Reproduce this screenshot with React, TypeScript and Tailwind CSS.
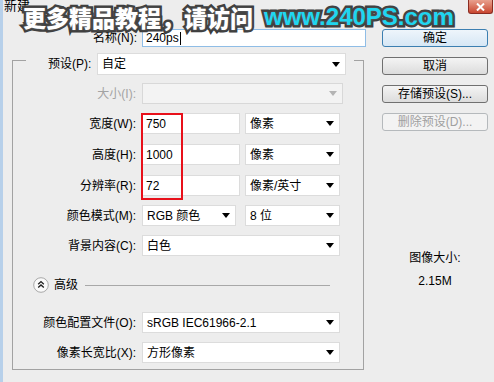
import React from "react";

const base = "font-['Liberation_Sans','Noto_Sans_CJK_SC',sans-serif] text-[12px] leading-none text-black";

function Arrow({ disabled }: { disabled?: boolean }) {
  return (
    <svg width="8" height="5" viewBox="0 0 8 5" className="shrink-0">
      <path d="M0 0H8L4 5Z" fill={disabled ? "#b4b4b4" : "#000"} />
    </svg>
  );
}

function Select({ w, text, disabled, h = "h-[21px]" }: { w: string; text?: string; disabled?: boolean; h?: string }) {
  return (
    <div
      className={`flex ${w} ${h} items-center justify-between border pl-[4px] pr-[5px] ${
        disabled ? "border-[#d8d8d8] bg-[#f3f3f3]" : "border-[#dcdcdc] bg-white"
      }`}
    >
      <span>{text}</span>
      <Arrow disabled={disabled} />
    </div>
  );
}

function Input({ w, text }: { w: string; text: string }) {
  return (
    <div className={`flex ${w} h-[21px] items-center border border-[#dcdcdc] bg-white pl-[3px]`}>{text}</div>
  );
}

function Row({
  label,
  children,
  muted,
  gap = "gap-[5px]",
}: {
  label: string;
  children: React.ReactNode;
  muted?: boolean;
  gap?: string;
}) {
  return (
    <div className="flex items-center">
      <div className={`w-[124px] pr-[1px] text-right ${muted ? "text-[#a3a3a3]" : ""}`}>{label}</div>
      <div className={`ml-[5px] flex items-center ${gap}`}>{children}</div>
    </div>
  );
}

function Button({ label, kind }: { label: string; kind?: "default" | "disabled" }) {
  const style =
    kind === "default"
      ? "border-[#3c7fb1] bg-gradient-to-b from-[#eef5fb] to-[#d6e7f5]"
      : kind === "disabled"
      ? "border-[#b5b9bc] bg-[#f3f3f3] text-[#a0a0a0]"
      : "border-[#707070] bg-gradient-to-b from-[#f4f4f4] to-[#dcdcdc]";
  return (
    <div className={`flex h-[18px] w-[106px] items-center justify-center rounded-[3px] border ${style}`}>{label}</div>
  );
}

function AdvIcon() {
  return (
    <svg width="16" height="16" viewBox="0 0 16 16">
      <circle cx="8" cy="8" r="7.3" fill="#fafafa" stroke="#a8a8a8" />
      <path d="M5.2 7.2L8 4.6L10.8 7.2M5.2 10.6L8 8L10.8 10.6" fill="none" stroke="#222" strokeWidth="1.4" />
    </svg>
  );
}

export default function App() {
  return (
    <div className={`relative h-[382px] w-[494px] overflow-hidden border-l-[3px] border-[#b7d0ea] bg-[#ededed] ${base}`}>
      {/* title bar */}
      <div className="flex h-[20px] items-start justify-between">
        <span className="-mt-[1px] pl-[1px] text-[13px]">新建</span>
        <div className="mr-[1px] flex h-[14px] w-[25px] items-center justify-center rounded-b-[3px] border border-t-0 border-[#8a2c22] bg-gradient-to-b from-[#e8a08e] to-[#c8452f]">
          <svg width="9" height="8" viewBox="0 0 9 8">
            <path d="M1 0.5L8 7.5M8 0.5L1 7.5" stroke="#fff" strokeWidth="2" />
          </svg>
        </div>
      </div>

      <div className="flex pt-[9px]">
        {/* left column */}
        <div className="ml-[9px] w-[354px]">
          <div className="flex h-[18px] items-center">
            <div className="w-[125px] text-right">名称(N):</div>
            <div className="ml-[5px] flex h-[18px] w-[224px] items-center border border-[#8fbde6] bg-white pl-[3px]">
              240ps<span className="ml-[1px] h-[13px] w-px bg-black" />
            </div>
          </div>

          {/* group box */}
          <div className="mt-[6px] w-[352px]">
            <div className="flex h-[22px]">
              <div className="mt-[7px] w-[14px] border-l border-t border-[#a2a2a2]" />
              <div className="ml-[22px] flex items-center">
                <span className="w-[44px]">预设(P):</span>
                <div className="ml-[5px]">
                  <Select w="w-[249px]" h="h-[22px]" text="自定" />
                </div>
              </div>
              <div className="ml-[8px] mt-[7px] flex-1 border-r border-t border-[#a2a2a2]" />
            </div>

            <div className="flex flex-col border-b border-l border-r border-[#a2a2a2] pb-[6px] pt-[8px]">
              <Row label="大小(I):" muted>
                <Select w="w-[201px]" disabled />
              </Row>
              <div className="mt-[9px]">
                <Row label="宽度(W):">
                  <Input w="w-[98px]" text="750" />
                  <Select w="w-[95px]" text="像素" />
                </Row>
              </div>
              <div className="mt-[10px]">
                <Row label="高度(H):">
                  <Input w="w-[98px]" text="1000" />
                  <Select w="w-[95px]" text="像素" />
                </Row>
              </div>
              <div className="mt-[10px]">
                <Row label="分辨率(R):">
                  <Input w="w-[98px]" text="72" />
                  <Select w="w-[95px]" text="像素/英寸" />
                </Row>
              </div>
              <div className="mt-[9px]">
                <Row label="颜色模式(M):" gap="gap-[9px]">
                  <Select w="w-[94px]" text="RGB 颜色" />
                  <Select w="w-[95px]" text="8 位" />
                </Row>
              </div>
              <div className="mt-[9px]">
                <Row label="背景内容(C):">
                  <Select w="w-[198px]" text="白色" />
                </Row>
              </div>

              <div className="ml-[20px] mt-[21px] flex h-[16px] items-center">
                <AdvIcon />
                <span className="ml-[5px] text-[12px]">高级</span>
                <div className="ml-[7px] h-px w-[245px] bg-[#a8a8a8]" />
              </div>

              <div className="mt-[19px]">
                <Row label="颜色配置文件(O):">
                  <Select w="w-[198px]" text="sRGB IEC61966-2.1" />
                </Row>
              </div>
              <div className="mt-[9px]">
                <Row label="像素长宽比(X):">
                  <Select w="w-[198px]" text="方形像素" />
                </Row>
              </div>
            </div>
          </div>
        </div>

        {/* right column */}
        <div className="ml-[16px] flex w-[106px] flex-col">
          <div className="flex flex-col gap-[10px]">
            <Button label="确定" kind="default" />
            <Button label="取消" />
            <Button label="存储预设(S)..." />
            <Button label="删除预设(D)..." kind="disabled" />
          </div>
          <div className="mt-[121px] text-center">图像大小:</div>
          <div className="mt-[11px] text-center">2.15M</div>
        </div>
      </div>

      {/* red highlight */}
      <div className="absolute left-[138px] top-[113px] h-[87px] w-[42px] border-2 border-[#e8101a]" />

      {/* watermark */}
      <div className="absolute left-[20px] top-[5px] flex h-[24px] items-center whitespace-nowrap font-black leading-none [paint-order:stroke_fill] [-webkit-text-stroke:5px_#3d3d3d] [text-shadow:0_0_3px_#6a6a6a]">
        <span className="font-['Noto_Sans_CJK_SC',sans-serif] text-[23px] text-white">更多精品教程，请访问</span>
        <span className="ml-[11px] font-['Liberation_Sans',sans-serif] text-[24px] font-bold text-[#1fd6f0]">www.240PS.com</span>
      </div>
    </div>
  );
}
